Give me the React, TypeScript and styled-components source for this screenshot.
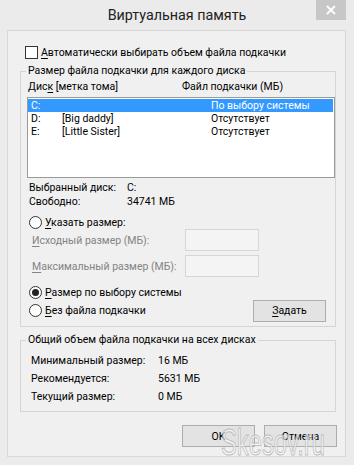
import * as React from "react";
import styled, { createGlobalStyle } from "styled-components";

const GlobalStyle = createGlobalStyle`
  body {
    margin: 0;
    font-family: Roboto, "Noto Sans", sans-serif;
    font-size: 10.5px;
    color: #000;
  }
`;

const Window = styled.div`
  width: 354px;
  height: 465px;
  background: #ebebeb;
  box-sizing: border-box;
  display: flex;
  flex-direction: column;
  overflow: hidden;
`;

const TitleBar = styled.div`
  height: 30px;
  display: grid;
  grid-template-columns: 1fr auto 1fr;
  align-items: start;
`;

const Title = styled.div`
  grid-column: 2;
  font-size: 14.3px;
  line-height: 31px;
  color: #222;
`;

const CloseButton = styled.div`
  grid-column: 3;
  justify-self: end;
  margin-right: 8px;
  width: 30px;
  height: 20px;
  background: #c7c7c7;
  display: flex;
  align-items: center;
  justify-content: center;
`;

const Client = styled.div`
  position: relative;
  margin: 0 8px 0 7px;
  height: 427px;
  box-sizing: border-box;
  border: 1px solid #d8d8d8;
  background: #f0f0f0;
  padding: 15px 9px 0 12px;
  display: flex;
  flex-direction: column;
`;

const CheckRow = styled.label`
  display: flex;
  align-items: center;
  gap: 3px;
  height: 13px;
  margin-left: 5px;
  white-space: nowrap;
`;

const CheckBox = styled.span`
  width: 13px;
  height: 13px;
  box-sizing: border-box;
  border: 1px solid #333;
  background: #fff;
`;

const Group = styled.fieldset<{ $top: number }>`
  margin: ${(p) => p.$top}px 0 0 0;
  padding: 0;
  border: 1px solid #d5d5d5;
  min-width: 0;
`;

const Legend = styled.legend`
  margin-left: 5px;
  padding: 0 2px;
  line-height: 14px;
  white-space: nowrap;
`;

const GroupBody = styled.div<{ $pad: string }>`
  padding: ${(p) => p.$pad};
  display: flex;
  flex-direction: column;
`;

const HeaderRow = styled.div`
  display: flex;
  height: 14px;
  line-height: 14px;
  margin: 2px 0 0 7px;
`;

const Col = styled.span<{ $w?: number }>`
  flex: 0 0 ${(p) => (p.$w ? `${p.$w}px` : "auto")};
  white-space: nowrap;
`;

const ListBox = styled.div`
  margin: 3px 0 0 6px;
  width: 308px;
  height: 81px;
  box-sizing: border-box;
  border: 1px solid #9a9a9a;
  background: #fff;
  padding: 1px 1px 0 0;
`;

const ListRow = styled.div<{ $selected?: boolean }>`
  display: flex;
  height: 13px;
  line-height: 13px;
  padding-left: 3px;
  background: ${(p) => (p.$selected ? "#3399ff" : "transparent")};
  color: ${(p) => (p.$selected ? "#fff" : "#000")};
`;

const InfoRow = styled.div<{ $w: number; $h: number; $top?: number; $pad?: number }>`
  display: flex;
  height: ${(p) => p.$h}px;
  line-height: ${(p) => p.$h}px;
  margin-top: ${(p) => p.$top ?? 0}px;
  padding-left: ${(p) => p.$pad ?? 7}px;
  white-space: nowrap;
  & > span:first-child {
    flex: 0 0 ${(p) => p.$w}px;
  }
`;

const RadioRow = styled.label<{ $top: number; $h?: number }>`
  display: flex;
  align-items: center;
  gap: 3px;
  height: ${(p) => p.$h ?? 14}px;
  margin-top: ${(p) => p.$top}px;
  padding-left: 8px;
  white-space: nowrap;
`;

const Radio = styled.span<{ $checked?: boolean }>`
  width: 13px;
  height: 13px;
  box-sizing: border-box;
  border-radius: 50%;
  border: 1px solid #333;
  background: #fff;
  display: flex;
  align-items: center;
  justify-content: center;
  &::after {
    content: "";
    width: 7px;
    height: 7px;
    border-radius: 50%;
    background: ${(p) => (p.$checked ? "#222" : "transparent")};
  }
`;

const SizeRow = styled.div<{ $top: number }>`
  display: flex;
  align-items: center;
  height: 22px;
  margin-top: ${(p) => p.$top}px;
  padding-left: 11px;
  color: #838383;
`;

const SizeLabel = styled.span`
  flex: 0 0 153px;
  white-space: nowrap;
`;

const DisabledInput = styled.span`
  width: 74px;
  height: 22px;
  box-sizing: border-box;
  border: 1px solid #d6d6d6;
  background: #f4f4f4;
`;

const Spacer = styled.span`
  flex: 1;
`;

const Button = styled.button<{ $mr?: number }>`
  width: 73px;
  height: 22px;
  box-sizing: border-box;
  border: 1px solid #adadad;
  background: #e3e3e3;
  font: inherit;
  color: #000;
  padding: 0;
  margin-right: ${(p) => p.$mr ?? 0}px;
`;

const ButtonRow = styled.div`
  display: flex;
  justify-content: flex-end;
  gap: 9px;
  margin: 13px -1px 0 0;
`;

const Watermark = styled.div`
  position: absolute;
  left: 213px;
  top: 394px;
  font-family: "Liberation Sans", sans-serif;
  font-size: 36px;
  line-height: 1;
  color: rgba(255, 255, 255, 0.55);
  -webkit-text-stroke: 1px #bdbdbd;
  transform: scaleX(0.66);
  transform-origin: left top;
  pointer-events: none;
  white-space: nowrap;
`;

const Key = styled.u`
  text-decoration-thickness: 1px;
  text-underline-offset: 2px;
`;

export default function App() {
  return (
    <>
      <GlobalStyle />
      <Window>
        <TitleBar>
          <Title>Виртуальная память</Title>
          <CloseButton>
            <svg width="10" height="10" viewBox="0 0 10 10">
              <path d="M1 1L9 9M9 1L1 9" stroke="#fff" strokeWidth="1.8" />
            </svg>
          </CloseButton>
        </TitleBar>
        <Client>
          <CheckRow>
            <CheckBox />
            <span>
              <Key>А</Key>втоматически выбирать объем файла подкачки
            </span>
          </CheckRow>

          <Group $top={5}>
            <Legend>Размер файла подкачки для каждого диска</Legend>
            <GroupBody $pad="0 0 5px 0">
              <HeaderRow>
                <Col $w={154}>
                  Дис<Key>к</Key> [метка тома]
                </Col>
                <Col>Файл подкачки (МБ)</Col>
              </HeaderRow>
              <ListBox>
                <ListRow $selected>
                  <Col $w={31}>C:</Col>
                  <Col $w={149}></Col>
                  <Col>По выбору системы</Col>
                </ListRow>
                <ListRow>
                  <Col $w={31}>D:</Col>
                  <Col $w={149}>[Big daddy]</Col>
                  <Col>Отсутствует</Col>
                </ListRow>
                <ListRow>
                  <Col $w={31}>E:</Col>
                  <Col $w={149}>[Little Sister]</Col>
                  <Col>Отсутствует</Col>
                </ListRow>
              </ListBox>
              <InfoRow $w={98} $h={14} $top={3} $pad={8}>
                <span>Выбранный диск:</span>
                <span>C:</span>
              </InfoRow>
              <InfoRow $w={98} $h={14} $pad={8}>
                <span>Свободно:</span>
                <span>34741 МБ</span>
              </InfoRow>
              <RadioRow $top={6}>
                <Radio />
                <span>
                  <Key>У</Key>казать размер:
                </span>
              </RadioRow>
              <SizeRow $top={0}>
                <SizeLabel>
                  <Key>И</Key>сходный размер (МБ):
                </SizeLabel>
                <DisabledInput />
              </SizeRow>
              <SizeRow $top={4}>
                <SizeLabel>
                  <Key>М</Key>аксимальный размер (МБ):
                </SizeLabel>
                <DisabledInput />
              </SizeRow>
              <RadioRow $top={8}>
                <Radio $checked />
                <span>
                  <Key>Р</Key>азмер по выбору системы
                </span>
              </RadioRow>
              <RadioRow $top={1} $h={21}>
                <Radio />
                <span>
                  <Key>Б</Key>ез файла подкачки
                </span>
                <Spacer />
                <Button $mr={9}>
                  <Key>З</Key>адать
                </Button>
              </RadioRow>
            </GroupBody>
          </Group>

          <Group $top={6}>
            <Legend>Общий объем файла подкачки на всех дисках</Legend>
            <GroupBody $pad="5px 0 5px 0">
              <InfoRow $w={127} $h={18} $pad={10}>
                <span>Минимальный размер:</span>
                <span>16 МБ</span>
              </InfoRow>
              <InfoRow $w={127} $h={18} $pad={10}>
                <span>Рекомендуется:</span>
                <span>5631 МБ</span>
              </InfoRow>
              <InfoRow $w={127} $h={18} $pad={10}>
                <span>Текущий размер:</span>
                <span>0 МБ</span>
              </InfoRow>
            </GroupBody>
          </Group>

          <ButtonRow>
            <Button>OK</Button>
            <Button>Отмена</Button>
          </ButtonRow>

          <Watermark>Skesov.ru</Watermark>
        </Client>
      </Window>
    </>
  );
}
